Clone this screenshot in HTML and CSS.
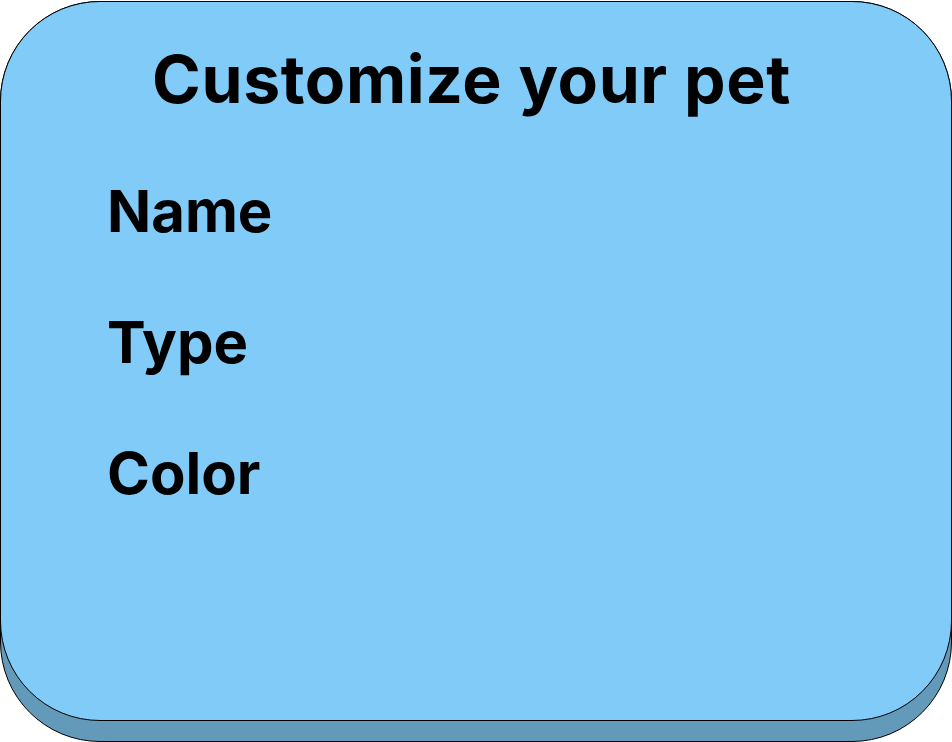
FILE: index.html
```html
<!DOCTYPE html>
<html>
<head>
<meta charset="utf-8">
<link rel="stylesheet" href="styles.css">
</head>
<body>
<div class="frame">
  <div class="card">
    <h1 class="title">Customize your pet</h1>
    <div class="fields">
      <div class="label">Name</div>
      <div class="label">Type</div>
      <div class="label">Color</div>
    </div>
  </div>
</div>
</body>
</html>
```
FILE: styles.css
```css
html, body {
  margin: 0;
  padding: 0;
  background: #ffffff;
}
body {
  font-family: Inter, "Liberation Sans", sans-serif;
  color: #000;
}
.frame {
  box-sizing: border-box;
  margin-top: 1px;
  width: 952px;
  height: 741px;
  background: #6399b9;
  border: 1px solid #000;
  border-radius: 100px;
}
.card {
  box-sizing: border-box;
  margin: -1px -1px 0 -1px;
  height: 720px;
  background: #80cbf8;
  border: 1px solid #000;
  border-radius: 100px;
  padding-top: 37px;
}
.title {
  margin: 0;
  padding-right: 9px;
  text-align: center;
  font-size: 66px;
  font-weight: 700;
  line-height: 80px;
  letter-spacing: 0.6px;
}
.fields {
  display: flex;
  flex-direction: column;
  gap: 71px;
  padding-left: 106px;
  margin-top: 62px;
}
.label {
  font-size: 58px;
  font-weight: 700;
  line-height: 60px;
}
```
